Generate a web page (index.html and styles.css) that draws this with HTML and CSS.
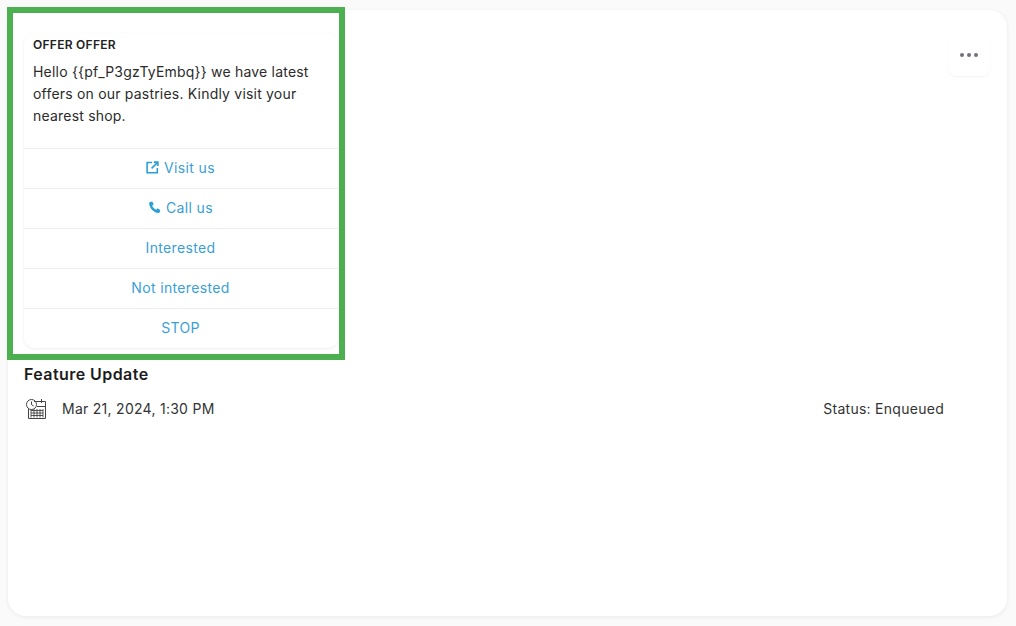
FILE: index.html
```html
<!DOCTYPE html>
<html lang="en">
<head>
<meta charset="utf-8">
<title>Feature Update</title>
<link rel="stylesheet" href="styles.css">
</head>
<body>
<main class="card">
  <div class="top">
    <section class="frame">
      <div class="message">
        <div class="message-body">
          <h2 class="message-title">OFFER OFFER</h2>
          <p class="message-text">Hello {{pf_P3gzTyEmbq}} we have latest offers on our pastries. Kindly visit your nearest shop.</p>
        </div>
        <div class="action action-linked">
          <svg class="action-icon" viewBox="0 0 14 14" width="13" height="13" aria-hidden="true"><path d="M6.500 1.700H1.200v11h11V7.500" fill="none" stroke="currentColor" stroke-width="1.700"/><path d="M8.500 1.200h4.300v4.300M12.800 1.200 6 8" fill="none" stroke="currentColor" stroke-width="1.700"/></svg>
          <span>Visit us</span>
        </div>
        <div class="action action-linked">
          <svg class="action-icon" viewBox="0 0 14 14" width="13" height="13" aria-hidden="true"><path d="M2.200 1.200 4.600.6l1.500 3L4.500 5c.7 1.800 2.300 3.500 4.300 4.400l1.400-1.500 3 1.700-.6 2.500c-.2.6-.8.9-1.500.8C5.800 12.200 1.700 7.600 1.200 2.600c0-.6.400-1.200 1-1.400Z" fill="currentColor"/></svg>
          <span>Call us</span>
        </div>
        <div class="action"><span>Interested</span></div>
        <div class="action"><span>Not interested</span></div>
        <div class="action"><span>STOP</span></div>
      </div>
    </section>
    <button class="menu" type="button" aria-label="More options"><i></i><i></i><i></i></button>
  </div>
  <h1 class="name">Feature Update</h1>
  <div class="meta">
    <div class="date">
      <svg class="date-icon" viewBox="0 0 22 22" width="22" height="22" aria-hidden="true">
        <g fill="none" stroke="#444" stroke-width="1">
          <path d="M9 3.500h11.500v17H3.500V11"/>
          <circle cx="6.500" cy="6.500" r="5"/>
          <path d="M6.500 3.500v3.200l2.200 1.300M16.500 1v4M12 8.500h8.500"/>
          <path d="M6 12.500h12M6 15h12M6 17.500h12M6 11v8.500M9 11v8.500M12 11v8.500M15 11v8.500M18 11v8.500" stroke-width=".9"/>
        </g>
      </svg>
      <span>Mar 21, 2024, 1:30 PM</span>
    </div>
    <div class="status">Status: Enqueued</div>
  </div>
</main>
</body>
</html>
```

FILE: styles.css
```css
* { box-sizing: border-box; }

html, body { height: 100%; }

body {
  margin: 0;
  padding: 10px 9px 10px 8px;
  background: #fafafa;
  font-family: Inter, "Liberation Sans", sans-serif;
  color: #222;
}

.card {
  height: 606px;
  background: #fff;
  border-radius: 18px;
  box-shadow: 0 1px 4px rgba(0, 0, 0, 0.07);
  padding: 0 17px 0 16px;
}

.top {
  display: flex;
  justify-content: space-between;
  align-items: flex-start;
}

.frame {
  width: 338px;
  height: 353px;
  margin: -3px 0 0 -17px;
  border: 6px solid #4caf50;
  padding: 20px 1px 6px 11px;
  background: #fff;
  flex: none;
}

.message {
  height: 100%;
  border-radius: 10px;
  box-shadow: 0 1px 3px rgba(0, 0, 0, 0.08);
  display: flex;
  flex-direction: column;
}

.message-body {
  flex: 1;
  padding: 4px 8px 0 9px;
}

.message-title {
  margin: 0 0 9px;
  font-size: 12px;
  line-height: 15px;
  font-weight: 600;
  letter-spacing: 0.27px;
  color: #222;
}

.message-text {
  margin: 0;
  font-size: 14px;
  line-height: 22px;
  letter-spacing: 0.2px;
  color: #2b2b2b;
}

.action {
  height: 40px;
  flex: none;
  display: flex;
  align-items: center;
  justify-content: center;
  gap: 5px;
  padding-right: 1px;
  border-top: 1px solid #ececec;
  font-size: 14px;
  letter-spacing: 0.35px;
  color: #3a9fd6;
}

.action span { margin-top: -2px; }

.action-linked span,
.action-linked svg { margin-top: -3px; }

.action-icon { flex: none; color: #2a9fd6; }

.menu {
  width: 42px;
  height: 42px;
  margin-top: 24px;
  border: 0;
  border-radius: 8px;
  background: #fff;
  box-shadow: 0 1px 2px rgba(0, 0, 0, 0.05);
  display: flex;
  align-items: center;
  justify-content: center;
  gap: 2.5px;
  padding: 0;
}

.menu i {
  width: 4.500px;
  height: 4.500px;
  border-radius: 50%;
  background: #6f727e;
}

.name {
  margin: 4px 0 0;
  font-size: 16px;
  line-height: 20px;
  font-weight: 600;
  letter-spacing: 0.43px;
  color: #1c1c1c;
}

.meta {
  margin-top: 14px;
  padding: 0 46px 0 1px;
  display: flex;
  justify-content: space-between;
  align-items: center;
  font-size: 14px;
  line-height: 22px;
  letter-spacing: 0.27px;
  color: #333;
}

.date {
  display: flex;
  align-items: center;
  gap: 15px;
}

.date-icon { flex: none; }
```
